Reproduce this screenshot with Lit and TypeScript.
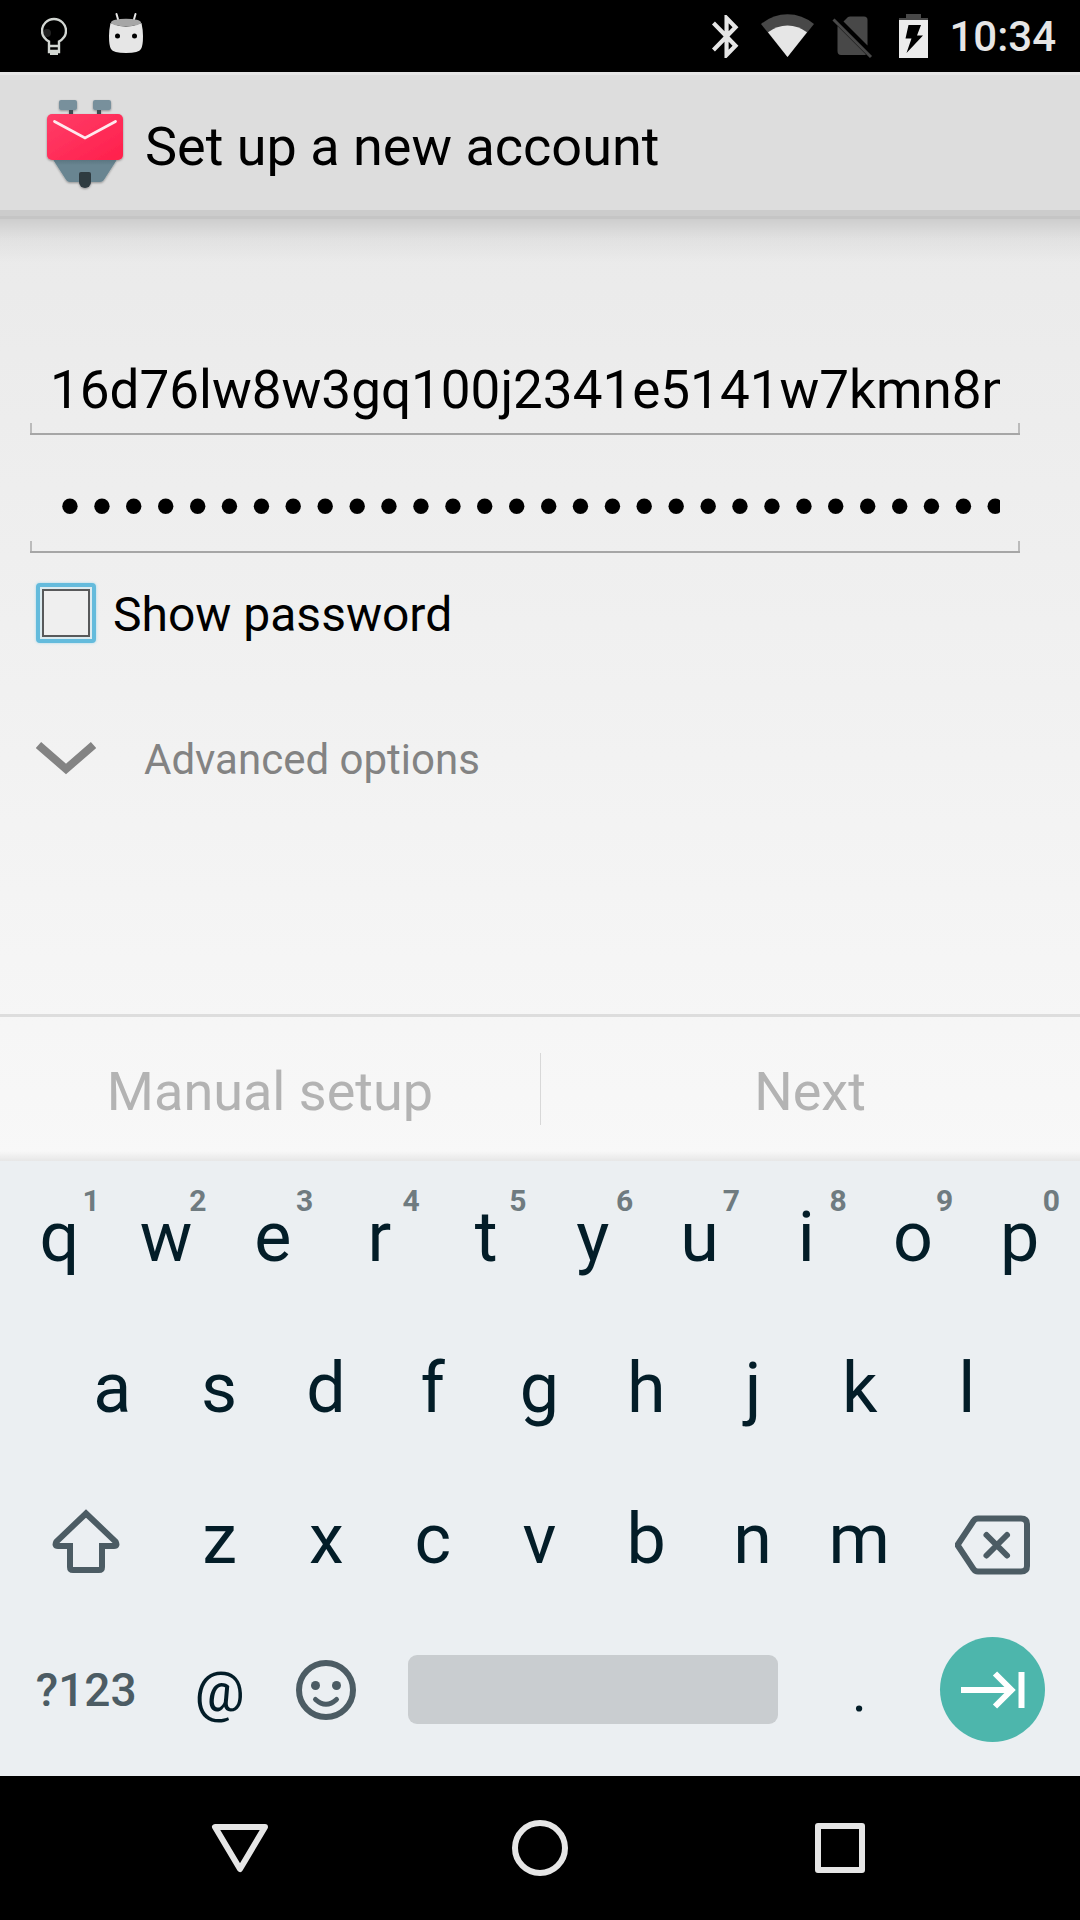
import { LitElement, html, css, svg } from "lit";
import { customElement, property, state } from "lit/decorators.js";

@customElement("status-bar")
class StatusBar extends LitElement {
  static styles = css`
    :host {
      display: flex;
      align-items: center;
      justify-content: space-between;
      height: 72px;
      padding: 0 24px 0 41px;
      background: #000;
      color: #e6e6e6;
      font: 500 42px/48px Roboto, sans-serif;
    }
    .group {
      display: flex;
      align-items: center;
    }
    .group svg {
      display: block;
    }
    .left {
      gap: 42px;
    }
    .clock {
      padding-top: 2px;
    }
  `;

  render() {
    return html`
      <div class="group left">
        <svg width="26" height="72" viewBox="41 0 26 72" fill="none" stroke="#d2d6d2" stroke-width="2.400">
          <circle cx="47" cy="33" r="4" fill="#222" stroke="none" />
          <path d="M49 52V41.500C44.500 39 42 36 42 31a12 12 0 0 1 24 0c0 5-2.500 8-7 10.500V52z" />
          <path d="M49 46h10M49 51h10" />
          <path d="M50 53.500h8" stroke-width="3" />
        </svg>
        <svg width="34" height="72" viewBox="109 0 34 72">
          <path d="M116.500 14l2 7M135.500 14l-2 7" stroke="#e6e6e6" stroke-width="2" stroke-linecap="round" />
          <path d="M110.500 23Q126 30 141.500 23Q143 30 143 36Q143 46 141 49Q139 53 126 53Q113 53 111 49Q109 46 109 36Q109 30 110.500 23z" fill="#e6e6e6" />
          <ellipse cx="126" cy="22.500" rx="15" ry="3.800" fill="#a6a6a6" />
          <circle cx="117.500" cy="36" r="2.500" fill="#000" />
          <circle cx="134.500" cy="36" r="2.500" fill="#000" />
        </svg>
      </div>
      <div class="group">
        <svg width="240" height="72" viewBox="709 0 240 72">
          <g transform="translate(701.600 10.700) scale(2.080 2.150)" fill="#e6e6e6">
            <path d="M17.710 7.710L12 2h-1v7.590L6.410 5 5 6.410 10.590 12 5 17.590 6.410 19 11 14.410V22h1l5.710-5.710-4.300-4.290 4.300-4.290zM13 5.830l1.880 1.880L13 9.590V5.830zm1.880 10.460L13 18.170v-3.760l1.880 1.880z" />
          </g>
          <path d="M787.500 57L761 24Q773 14.300 787.500 14.300T814 24z" fill="#484848" />
          <path d="M787.500 57L768 32.300Q777 25.500 787.500 25.500T807 32.300z" fill="#e6e6e6" />
          <path d="M843.500 21.500L848 17Q849 16.500 850 16.500H864Q867.500 16.500 867.500 20V45.500z" fill="#484848" />
          <path d="M837.500 26L866 54.500Q865 55 864 55H841Q837.500 55 837.500 51z" fill="#484848" />
          <path d="M833.500 19.500L871 57" stroke="#484848" stroke-width="3" />
          <path d="M906 14h15v4h7v2h-29v-2h7z" fill="#484848" />
          <path d="M899 20h29v38h-29z" fill="#ececec" />
          <path d="M908.500 25H921L917 35.500H923L906.500 53L911.500 38.500H905.500z" fill="#000" />
        </svg>
        <span class="clock">10:34</span>
      </div>
    `;
  }
}

@customElement("account-form")
class AccountForm extends LitElement {
  @state() private showPassword = false;

  static styles = css`
    :host {
      display: flex;
      flex-direction: column;
      flex: 1;
      background: linear-gradient(#eaeaea, #f8f8f8);
      font-family: Roboto, sans-serif;
      color: #000;
    }
    .fields {
      display: flex;
      flex-direction: column;
      flex: 1;
      align-items: flex-start;
      padding: 126px 60px 24px 30px;
      background: linear-gradient(rgba(0, 0, 0, 0.12), rgba(0, 0, 0, 0.04) 20px, transparent 44px);
    }
    .field {
      box-sizing: border-box;
      width: 100%;
      height: 90px;
      margin: 0 0 28px;
      padding: 2px 20px 0;
      border: 0;
      border-bottom: 2px solid #a6a6a6;
      border-radius: 0;
      outline: 0;
      color: #000;
      font: 53px Roboto, sans-serif;
      background:
        linear-gradient(#bbb, #bbb) left bottom / 2px 10px no-repeat,
        linear-gradient(#bbb, #bbb) right bottom / 2px 10px no-repeat;
    }
    .field[type="password"] {
      padding: 0 20px 0 24px;
      font-family: "DejaVu Sans Mono", monospace;
    }
    .check {
      display: flex;
      align-items: center;
      gap: 17px;
      margin: 2px 6px 85px;
      font-size: 48px;
      line-height: 56px;
    }
    .check span {
      padding-top: 4px;
    }
    .box {
      appearance: none;
      box-sizing: border-box;
      width: 60px;
      height: 60px;
      margin: 0;
      padding: 2px;
      border: 4px solid #64bbdc;
      border-radius: 4px;
      box-shadow: 0 0 3px #a5d8ea;
      background: #dcebf0;
    }
    .box::before {
      content: "";
      display: block;
      box-sizing: border-box;
      height: 48px;
      border: 2px solid #58595a;
      background: #efefef;
    }
    .box:checked::before {
      background: #64bbdc;
    }
    .advanced {
      display: flex;
      align-items: center;
      gap: 48px;
      margin: 0 6px;
      padding: 0;
      border: 0;
      background: none;
      color: #838383;
      font: 42px/56px Roboto, sans-serif;
    }
    .advanced span {
      padding-top: 4px;
    }
    .actions {
      display: flex;
      align-items: center;
      height: 144px;
      border-top: 3px solid #ddd;
      background: linear-gradient(transparent 134px, rgba(0, 0, 0, 0.07));
    }
    .action {
      flex: 1;
      height: 144px;
      padding: 6px 0 0;
      border: 0;
      background: none;
      color: #b3b3b3;
      font: 54px/64px Roboto, sans-serif;
    }
    .divider {
      width: 1px;
      height: 72px;
      margin-right: -1px;
      background: #d8d8d8;
    }
  `;

  render() {
    return html`
      <div class="fields">
        <input class="field" type="text" aria-label="Email address" value="16d76lw8w3gq100j2341e5141w7kmn8n" />
        <input
          class="field"
          type=${this.showPassword ? "text" : "password"}
          aria-label="Password"
          value="abcdefghijklmnopqrstuvwxyzabcdefghij"
        />
        <label class="check">
          <input
            class="box"
            type="checkbox"
            .checked=${this.showPassword}
            @change=${() => (this.showPassword = !this.showPassword)}
          />
          <span>Show password</span>
        </label>
        <button class="advanced">
          <svg width="60" height="36" viewBox="0 0 60 36">
            <path d="M2.500 5L30 29L57.500 5" fill="none" stroke="#838383" stroke-width="8" />
          </svg>
          <span>Advanced options</span>
        </button>
      </div>
      <div class="actions">
        <button class="action" disabled>Manual setup</button>
        <span class="divider"></span>
        <button class="action" disabled>Next</button>
      </div>
    `;
  }
}

@customElement("key-cap")
class KeyCap extends LitElement {
  @property() label = "";
  @property() hint = "";

  static styles = css`
    :host {
      display: flex;
      flex: 107 1 0;
      min-width: 0;
    }
    .key {
      position: relative;
      width: 100%;
      padding: 0;
      border: 0;
      background: none;
      color: #031d28;
      font: 70px/80px Roboto, sans-serif;
    }
    .hint {
      position: absolute;
      top: 22px;
      right: 13px;
      color: #6f7b80;
      font: 700 30px/36px Roboto, sans-serif;
    }
  `;

  render() {
    return html`
      <button class="key">${this.label}${this.hint ? html`<span class="hint">${this.hint}</span>` : ""}</button>
    `;
  }
}

@customElement("soft-keyboard")
class SoftKeyboard extends LitElement {
  static styles = css`
    :host {
      display: block;
      padding: 0 7px 11px 6px;
      background: #ebeff2;
      font-family: Roboto, sans-serif;
    }
    .row {
      display: flex;
      height: 151px;
    }
    .inset {
      padding: 0 53px;
    }
    .key {
      display: flex;
      flex: 107 1 0;
      align-items: center;
      justify-content: center;
      min-width: 0;
      padding: 0;
      border: 0;
      background: none;
      color: #031d28;
      font: 56px/64px Roboto, sans-serif;
    }
    .wide {
      flex-grow: 161;
    }
    .symbols {
      color: #4c5c64;
      font: 500 46px/56px Roboto, sans-serif;
    }
    .mark {
      padding-top: 4px;
    }
    .space {
      flex-grow: 428;
    }
    .bar {
      flex: 1;
      height: 69px;
      margin: 0 28px;
      border-radius: 9px;
      background: #c9cdd0;
    }
    .enter {
      width: 105px;
      height: 105px;
      border-radius: 50%;
      background: #4db6ac;
    }
  `;

  private letters(text: string, hints = "") {
    return [...text].map((c, i) => html`<key-cap label=${c} hint=${hints[i] ?? ""}></key-cap>`);
  }

  render() {
    return html`
      <div class="row">${this.letters("qwertyuiop", "1234567890")}</div>
      <div class="row inset">${this.letters("asdfghjkl")}</div>
      <div class="row">
        <button class="key wide" aria-label="Shift">
          <svg width="68" height="72" viewBox="52 1503 68 72" fill="none" stroke="#4c5c64" stroke-width="6">
            <path d="M86 1513.500L56.500 1541.500Q54 1546 58 1546H70V1567Q70 1570 73 1570H99Q102 1570 102 1567V1546H114Q118 1546 115.500 1541.500z" />
          </svg>
        </button>
        ${this.letters("zxcvbnm")}
        <button class="key wide" aria-label="Delete">
          <svg width="76" height="72" viewBox="955 1503 76 72" fill="none" stroke="#4c5c64" stroke-width="6">
            <path d="M957.500 1545L973.500 1521Q975 1518.500 978 1518.500H1021Q1027 1518.500 1027 1524V1566Q1027 1571.500 1021 1571.500H978Q975 1571.500 973.500 1569z" />
            <path d="M986.500 1535l20.500 20.500M1007 1535l-20.500 20.500" stroke-linecap="round" />
          </svg>
        </button>
      </div>
      <div class="row">
        <button class="key wide symbols">?123</button>
        <button class="key mark">@</button>
        <button class="key" aria-label="Emoji">
          <svg width="60" height="60" viewBox="0 0 60 60" fill="#4c5c64">
            <circle cx="30" cy="30" r="27" fill="none" stroke="#4c5c64" stroke-width="6" />
            <circle cx="19.500" cy="25.500" r="4.500" />
            <circle cx="40.500" cy="25.500" r="4.500" />
            <path d="M19.500 39.500Q30 49 40.500 39.500" fill="none" stroke="#4c5c64" stroke-width="5" stroke-linecap="round" />
          </svg>
        </button>
        <button class="key space" aria-label="Space"><span class="bar"></span></button>
        <button class="key mark">.</button>
        <button class="key wide" aria-label="Next field">
          <svg class="enter" viewBox="0 0 105 105" fill="none" stroke="#fff" stroke-width="6">
            <path d="M21 53H70M55 36.500L71.500 53L55 69.500M81.500 35V71" />
          </svg>
        </button>
      </div>
    `;
  }
}

const navShapes = [
  { name: "Back", shape: svg`<path d="M5 9H55L30 51z" />` },
  { name: "Home", shape: svg`<circle cx="30" cy="30" r="25" />` },
  { name: "Recent apps", shape: svg`<rect x="8" y="8" width="44" height="44" />` },
];

@customElement("nav-bar")
class NavBar extends LitElement {
  static styles = css`
    :host {
      display: flex;
      height: 144px;
      padding: 0 90px;
      background: #000;
    }
    .nav {
      display: flex;
      flex: 1;
      align-items: center;
      justify-content: center;
      padding: 0;
      border: 0;
      background: none;
    }
  `;

  render() {
    return navShapes.map(
      (n) => html`
        <button class="nav" aria-label=${n.name}>
          <svg width="60" height="60" viewBox="0 0 60 60" fill="none" stroke="#e6e6e6" stroke-width="6" stroke-linejoin="round">
            ${n.shape}
          </svg>
        </button>
      `,
    );
  }
}

@customElement("app-root")
class AppRoot extends LitElement {
  static styles = css`
    :host {
      display: flex;
      flex-direction: column;
      min-height: 100vh;
      background: #000;
    }
    .header {
      box-sizing: border-box;
      display: flex;
      align-items: center;
      gap: 13px;
      height: 147px;
      padding: 0 36px;
      background: linear-gradient(#e6e6e6 3px, #ddd 3px, #ddd 138px, #ccc 138px, #ccc 144px, #c5c5c5 144px);
    }
    .title {
      margin: 0;
      padding-top: 2px;
      color: #000;
      font: 400 54px/64px Roboto, sans-serif;
    }
  `;

  render() {
    return html`
      <status-bar></status-bar>
      <header class="header">
        <svg width="96" height="97" viewBox="36 97 96 97">
          <defs>
            <linearGradient id="body" x1="0" y1="0" x2="1" y2="1">
              <stop offset="0" stop-color="#ff3d68" />
              <stop offset="1" stop-color="#ff1f4b" />
            </linearGradient>
            <linearGradient id="base" x1="0" y1="0" x2="0" y2="1">
              <stop offset="0" stop-color="#56707b" />
              <stop offset="0.300" stop-color="#698591" />
              <stop offset="1" stop-color="#698591" />
            </linearGradient>
            <filter id="drop" x="-20%" y="-20%" width="140%" height="140%">
              <feDropShadow dx="0" dy="1" stdDeviation="1" flood-opacity="0.350" />
            </filter>
          </defs>
          <g filter="url(#drop)">
            <path d="M69 109h4v6h-4zM97 109h4v6h-4z" fill="#3e4b51" />
            <rect x="59" y="100" width="18" height="10" rx="2" fill="#78909c" />
            <rect x="93" y="100" width="18" height="10" rx="2" fill="#78909c" />
            <path d="M52 158H118L104.500 179Q103 182 100 182H70Q67 182 65.500 179z" fill="url(#base)" />
            <path d="M79 174q0-2 2-2h8q2 0 2 2v8a6 6 0 0 1-12 0z" fill="#2f3a40" />
            <rect x="47" y="114" width="76" height="46" rx="5" fill="url(#body)" />
          </g>
          <path d="M54.500 121.500L85 138L115.500 121.500" fill="none" stroke="#ffe9ee" stroke-width="2.800" stroke-linecap="round" />
        </svg>
        <h1 class="title">Set up a new account</h1>
      </header>
      <account-form></account-form>
      <soft-keyboard></soft-keyboard>
      <nav-bar></nav-bar>
    `;
  }
}
